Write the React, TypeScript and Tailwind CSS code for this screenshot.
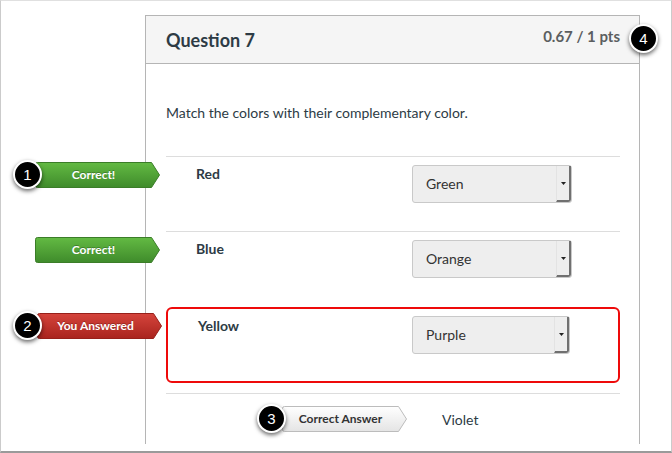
import React from 'react';

type Tone = 'green' | 'red' | 'gray';

const tones: Record<Tone, { top: string; bottom: string; stroke: string; text: string }> = {
    green: { top: '#63ba43', bottom: '#3f8b2b', stroke: '#3b7d28', text: 'text-white' },
    red: { top: '#d5443c', bottom: '#a9241e', stroke: '#97201a', text: 'text-white' },
    gray: { top: '#ffffff', bottom: '#e4e4e4', stroke: '#bcbcbc', text: 'text-[#333333]' },
};

function Num({ n, className }: { n: number; className: string }) {
    return (
        <div
            className={`absolute flex h-[29px] w-[29px] items-center justify-center rounded-full border-2 border-white bg-black font-['Liberation_Sans',Arial,sans-serif] text-[15px] leading-none text-white shadow-[0_2px_4px_rgba(0,0,0,0.6)] ${className}`}
        >
            {n}
        </div>
    );
}

function Badge({ tone, label, children }: { tone: Tone; label: string; children?: React.ReactNode }) {
    const t = tones[tone];
    return (
        <div className="relative z-10 h-[26px] w-[125px]">
            <svg className="absolute inset-0" width="125" height="26" viewBox="0 0 125 26">
                <defs>
                    <linearGradient id={`badge-${tone}`} x1="0" y1="0" x2="0" y2="1">
                        <stop offset="0" stopColor={t.top} />
                        <stop offset="1" stopColor={t.bottom} />
                    </linearGradient>
                </defs>
                <path
                    d="M2.5 0.5 H116.5 L124.5 13 L116.5 25.5 H2.5 Q0.5 25.5 0.5 23.5 V2.5 Q0.5 0.5 2.5 0.5 Z"
                    fill={`url(#badge-${tone})`}
                    stroke={t.stroke}
                />
            </svg>
            <span
                className={`relative flex h-full items-center justify-center pr-[8px] text-[12px] font-bold ${t.text} ${
                    tone === 'gray' ? '' : '[text-shadow:0_-1px_0_rgba(0,0,0,0.25)]'
                }`}
            >
                {label}
            </span>
            {children}
        </div>
    );
}

function Select({ value, wide = true }: { value: string; wide?: boolean }) {
    return (
        <div
            className={`flex h-[38px] shrink-0 rounded-[3px] border border-[#c9c9c9] bg-[#eeeeee] ${
                wide ? 'w-[160px]' : 'w-[158px]'
            }`}
        >
            <span className="flex-1 pl-[13px] text-[14px] leading-[36px] text-[#333333]">{value}</span>
            <span className="flex w-[15px] items-center justify-center rounded-br-[3px] border-b-2 border-l border-r-2 border-b-[#707070] border-l-[#e3e3e3] border-r-[#707070]">
                <svg width="5" height="3" viewBox="0 0 5 3">
                    <path d="M0 0h5L2.5 3z" fill="#222" />
                </svg>
            </span>
        </div>
    );
}

const cell = 'w-[495px] shrink-0 border-x border-[#b5b5b5] pl-[20px] pr-[19px]';

export default function App() {
    return (
        <div className="h-[453px] w-[672px] overflow-hidden border border-[#cbcbcb] border-b-2 border-t-[#e0e0e0] border-b-[#9a9a9a] bg-white pt-[14px] font-['Lato',sans-serif] text-[#2d3b45]">
            {/* header */}
            <div className="relative ml-[144px] flex h-[49px] w-[495px] items-start justify-between border border-[#b5b5b5] bg-[#f5f5f5] pl-[20px] pr-[19px]">
                <span className="block pt-[15px] text-[18px] font-bold leading-none">Question 7</span>
                <span className="block pt-[13px] text-[15px] font-bold leading-none text-[#5b5e60]">
                    0.67 / 1 pts
                </span>
                <Num n={4} className="right-[-19px] top-[8px]" />
            </div>

            {/* intro */}
            <div className="flex">
                <div className="w-[144px] shrink-0" />
                <div className={`${cell} h-[92px] pt-[40px]`}>
                    <p className="text-[14px] leading-[17px]">Match the colors with their complementary color.</p>
                </div>
            </div>

            {/* Red */}
            <div className="flex">
                <div className="w-[144px] shrink-0 pl-[34px] pt-[6px]">
                    <Badge tone="green" label="Correct!">
                        <Num n={1} className="left-[-22px] top-[-2px]" />
                    </Badge>
                </div>
                <div className={cell}>
                    <div className="flex h-[75px] border-t border-[#dddddd] pt-[8px]">
                        <div className="w-[246px] pl-[30px] text-[14px] font-bold leading-[17px]">Red</div>
                        <Select value="Green" />
                    </div>
                </div>
            </div>

            {/* Blue */}
            <div className="flex">
                <div className="w-[144px] shrink-0 pl-[34px] pt-[6px]">
                    <Badge tone="green" label="Correct!" />
                </div>
                <div className={cell}>
                    <div className="flex h-[76px] border-t border-[#dddddd] pt-[8px]">
                        <div className="w-[246px] pl-[30px] text-[14px] font-bold leading-[17px]">Blue</div>
                        <Select value="Orange" />
                    </div>
                </div>
            </div>

            {/* Yellow */}
            <div className="flex">
                <div className="w-[144px] shrink-0 pl-[36px] pt-[6px]">
                    <Badge tone="red" label="You Answered">
                        <Num n={2} className="left-[-24px] top-[-2px]" />
                    </Badge>
                </div>
                <div className={`${cell} pb-[10px]`}>
                    <div className="flex h-[76px] rounded-[6px] border-2 border-[#ee0a0a] pt-[7px]">
                        <div className="w-[244px] pl-[30px] pt-[1px] text-[14px] font-bold leading-[17px]">
                            Yellow
                        </div>
                        <Select value="Purple" wide={false} />
                    </div>
                </div>
            </div>

            {/* correct answer */}
            <div className="flex">
                <div className="w-[144px] shrink-0" />
                <div className={cell}>
                    <div className="flex items-center border-t border-[#dddddd] pb-[12px] pl-[116px] pt-[12px]">
                        <Badge tone="gray" label="Correct Answer">
                            <Num n={3} className="left-[-25px] top-[-2px]" />
                        </Badge>
                        <span className="ml-[35px] text-[14px] leading-[17px]">Violet</span>
                    </div>
                </div>
            </div>
        </div>
    );
}
